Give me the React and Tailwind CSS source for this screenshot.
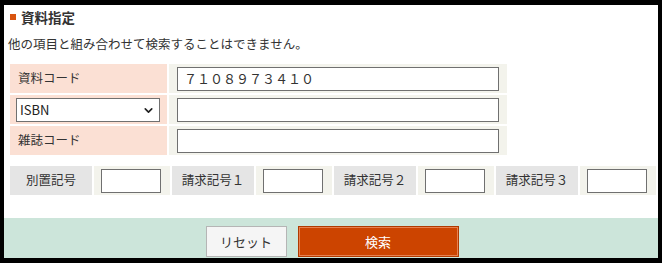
import { ChevronDown } from 'lucide-react';

const font = { fontFamily: '"Noto Sans CJK JP", "Noto Sans", sans-serif' };

function Field({ value = '' }) {
  return (
    <input
      readOnly
      value={value}
      className="h-[24px] w-[322px] border border-[#707070] bg-white px-[6px] text-[13px] text-[#333] outline-none"
    />
  );
}

function CodeRow({ label, children, value }) {
  return (
    <div className="flex h-[29px] gap-[2px]">
      <div className="flex w-[158px] items-center bg-[#fbe0d4] pl-[8px] text-[12.5px] text-[#333]">
        {children || label}
      </div>
      <div className="flex flex-1 items-center bg-[#f3f3ec] px-[8px]">
        <Field value={value} />
      </div>
    </div>
  );
}

function SmallPair({ label }) {
  return (
    <>
      <div className="flex w-[82px] items-center justify-center bg-[#e5e5e5] text-[12.5px] text-[#333]">
        {label}
      </div>
      <div className="flex flex-1 items-center bg-[#f3f3ec] pl-[7px]">
        <input
          readOnly
          className="h-[24px] w-[60px] border border-[#707070] bg-white outline-none"
        />
      </div>
    </>
  );
}

export default function App() {
  return (
    <div
      className="h-[263px] w-[662px] bg-black pb-[5px] pl-[4px] pr-[4px] pt-[5px]"
      style={font}
    >
      <div className="flex h-full flex-col bg-white">
        <div className="flex h-[24px] items-center gap-[5px] pl-[6px]">
          <span className="h-[6px] w-[6px] bg-[#d9540f]" />
          <span className="text-[13.5px] font-bold text-[#333]">資料指定</span>
        </div>
        <p className="mt-[5px] h-[20px] pl-[4px] text-[12.5px] leading-[20px] text-[#333]">
          他の項目と組み合わせて検索することはできません。
        </p>

        <div className="ml-[6px] mt-[10px] flex w-[497px] flex-col gap-[2px]">
          <CodeRow label="資料コード" value="７１０８９７３４１０" />
          <CodeRow>
            <div className="relative -ml-[2px]">
              <select
                defaultValue="ISBN"
                className="h-[24px] w-[144px] appearance-none border border-[#707070] bg-white pl-[3px] text-[13px] text-[#222] outline-none"
              >
                <option>ISBN</option>
                <option>ISSN</option>
              </select>
              <ChevronDown
                size={13}
                strokeWidth={3}
                className="pointer-events-none absolute right-[5px] top-[6px] text-[#222]"
              />
            </div>
          </CodeRow>
          <CodeRow label="雑誌コード" />
        </div>

        <div className="ml-[6px] mt-[11px] flex h-[29px] w-[646px] gap-[2px]">
          <SmallPair label="別置記号" />
          <SmallPair label="請求記号１" />
          <SmallPair label="請求記号２" />
          <SmallPair label="請求記号３" />
        </div>

        <div className="mt-auto flex h-[40px] justify-center gap-[11px] bg-[#cce5da] pl-[2px] pt-[8px]">
          <button className="h-[31px] w-[81px] border border-[#b5b5b5] bg-[#f5f5f5] text-[13px] text-[#333]">
            リセット
          </button>
          <button className="h-[31px] w-[161px] border border-[#b03a00] bg-[#cc4400] text-[13px] text-white shadow-[inset_0_0_0_1px_#e8804f]">
            検索
          </button>
        </div>
      </div>
    </div>
  );
}
